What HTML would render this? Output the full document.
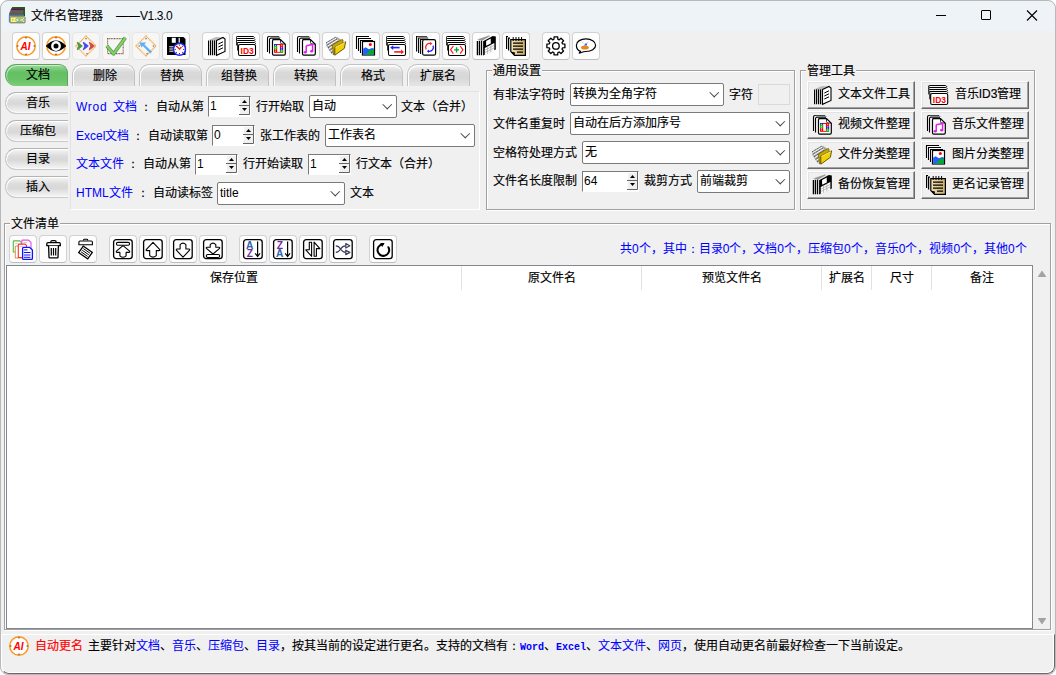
<!DOCTYPE html>
<html lang="zh-CN"><head><meta charset="utf-8">
<style>
*{box-sizing:border-box;margin:0;padding:0}
html,body{width:1056px;height:675px;overflow:hidden;background:#ffffff}
body{font-family:"Liberation Sans",sans-serif;font-size:12px;color:#000;position:relative;-webkit-text-stroke:0.15px currentColor}
.a{position:absolute}
#win{position:absolute;left:0;top:0;width:1056px;height:675px;background:#f0f0f0;border-radius:8px}
#frame{position:absolute;left:0;top:0;width:1056px;height:675px;border:1px solid #b9b9b9;border-radius:8px;pointer-events:none}
#title{position:absolute;left:0;top:0;width:1056px;height:31px;background:#eef3f8;border-radius:8px 8px 0 0}
.t{position:absolute;white-space:nowrap;line-height:16px;height:16px}
.tb{position:absolute;top:32px;width:28px;height:28px;background:#fdfdfd;border:1px solid #d2d2d2;border-bottom-color:#bdbdbd;border-radius:4px}
.tb.dis{background:#f6f6f6;border-color:#e6e6e6}
.tb svg,.lb svg,.mb svg{position:absolute}
.tab{position:absolute;top:64px;width:63px;height:22px;border:1px solid #c2c2c2;border-bottom:none;border-radius:10px 9px 0 0;background:linear-gradient(#f4f4f4,#d9d9d9 35%,#d7d7d7 60%,#e5e5e5);box-shadow:inset 1px 1px 0 #fff,inset 0 2px 0 rgba(255,255,255,0.6);text-align:center;line-height:22px;padding-left:2px}
.tab.on{background:linear-gradient(#9ad898,#64c064 35%,#68c367 70%,#7ccd78);border-color:#5aa55a;border-bottom:none;border-radius:11px 9px 0 11px;box-shadow:inset 1px 1px 0 rgba(255,255,255,0.55);line-height:20px}
.vt{position:absolute;left:5px;width:63px;height:22px;border:1px solid #c8c8c8;border-top-color:#b4b4b4;border-right:none;border-radius:11px 0 0 11px;background:linear-gradient(#f6f6f6,#dcdcdc 35%,#d8d8d8 55%,#ececec 85%,#f6f6f6);box-shadow:inset 1px 1px 0 #fff,inset 0 -1px 0 #fafafa;text-align:center;line-height:21px;padding-left:2px}
.grp{position:absolute;border:1px solid #a0a0a0;box-shadow:1px 1px 0 #fff, inset 1px 1px 0 #fff}
.gt{position:absolute;background:#f0f0f0;padding:0 1px;line-height:14px;height:14px;white-space:nowrap}
.cb{position:absolute;background:#fff;border:1px solid #7a7a7a;border-radius:2px;height:23px;line-height:21px;padding-left:2px;white-space:nowrap}
.cb:after{content:"";position:absolute;right:6px;top:5px;width:5.5px;height:5.5px;border-right:1px solid #444;border-bottom:1px solid #444;transform:rotate(45deg)}
.sp{position:absolute;background:#fff;height:21px;border-top:1px solid #7a7a7a;border-left:1px solid #7a7a7a;border-right:1px solid #fff;border-bottom:1px solid #fff;line-height:19px;padding-left:1px}
.sp svg{position:absolute;right:0;top:-1px}
.blue{color:#0000ff;-webkit-text-stroke:0.05px currentColor}
.mb{position:absolute;width:108px;height:28px;background:#f0f0f0;border-top:1px solid #fff;border-left:1px solid #fff;border-right:1px solid #696969;border-bottom:1px solid #696969;box-shadow:inset -1px -1px 0 #a0a0a0,inset 1px 1px 0 #e3e3e3;line-height:25px;padding-left:26px;text-align:center;white-space:nowrap}
.lb{position:absolute;top:235px;width:28px;height:28px;background:#fdfdfd;border:1px solid #d2d2d2;border-bottom-color:#bdbdbd;border-radius:4px}
.hs{position:absolute;top:266px;width:1px;height:24px;background:#e2e2e2}
.ht{position:absolute;top:270px;line-height:16px;white-space:nowrap;text-align:center}
.ln,.sp{-webkit-text-stroke:0}
svg text{-webkit-text-stroke:0}

</style></head><body>
<div id="win"></div>
<div id="title"></div>
<!-- title -->
<svg class="a" style="left:8px;top:6px" width="18" height="18" viewBox="0 0 18 18"><path d="M4.2 1H16.6L17 1.6V10H1.2V8.2Z" fill="#333"/><path d="M4.4 1.2H16.6V2.6H3.4Z" fill="#0a7a0a"/><path d="M3.4 2.6H16V3.6H2.8Z" fill="#a01818"/><path d="M2.8 3.6H16V4.6H2.3Z" fill="#1818a0"/><path d="M2.3 4.6H15.6V5.6H1.9Z" fill="#b08a40"/><path d="M1.9 5.6H15.6V6.6H1.5Z" fill="#8040b0"/><path d="M1.5 6.6H15.6V7.6H1.3Z" fill="#3a9a3a"/><path d="M1.3 7.6H15.6V8.6H1.2Z" fill="#b04040"/><path d="M1.2 8.6H16V9.8H1.2Z" fill="#4a90b0"/><rect x="15.6" y="1.6" width="1.4" height="6.8" fill="#0a6a0a"/><rect x="2" y="10.8" width="15" height="6" rx="0.6" fill="#fff680" stroke="#555" stroke-width="0.9"/><path d="M1.4 9V16.2" stroke="#4a8ab0" stroke-width="1.1"/><rect x="7.8" y="12.2" width="7.6" height="3.2" rx="1.5" fill="#fff" stroke="#55bb33" stroke-width="0.9"/><path d="M10.2 12.8V14.8M11.6 12.8V14.8M13 12.8V14.8" stroke="#888" stroke-width="0.9"/><rect x="4.2" y="13.2" width="1.3" height="1.3" fill="#999"/></svg>
<div class="t" style="left:31px;top:8px">文件名管理器</div>
<div class="t ln" style="left:116px;top:8px">——<span style="letter-spacing:-0.4px">V1.3.0</span></div>
<div class="a" style="left:936px;top:15px;width:10px;height:1px;background:#000"></div>
<div class="a" style="left:981px;top:10px;width:10px;height:10px;border:1px solid #000;border-radius:1px"></div>
<svg class="a" style="left:1026px;top:10px" width="12" height="11" viewBox="0 0 12 11"><path d="M1 0.5L11 10.5M11 0.5L1 10.5" stroke="#000" stroke-width="1.1"/></svg>

<!-- main toolbar -->
<div class="tb" style="left:12px"><svg style="left:0px;top:-1px" width="27" height="28" viewBox="0 0 27 28"><circle cx="13" cy="14" r="9.3" fill="#fff" stroke="#ff9417" stroke-width="1.4"/><g fill="#666"><rect x="12" y="5.299999999999999" width="2" height="1"/><rect x="12" y="21.7" width="2" height="1"/><rect x="4.299999999999999" y="13" width="1" height="2"/><rect x="20.7" y="13" width="1" height="2"/></g><text x="7.6" y="17.6" font-family="Liberation Sans" font-weight="bold" font-style="italic" font-size="11.7" fill="#ff0000" textLength="10" lengthAdjust="spacingAndGlyphs">AI</text></svg></div>
<div class="tb" style="left:42px"><svg style="left:0px;top:-1px" width="27" height="28" viewBox="0 0 27 28"><circle cx="13" cy="14" r="9.3" fill="#fff" stroke="#ff9417" stroke-width="1.4"/><g fill="#666"><rect x="12" y="5.299999999999999" width="2" height="1"/><rect x="12" y="21.7" width="2" height="1"/><rect x="4.299999999999999" y="13" width="1" height="2"/><rect x="20.7" y="13" width="1" height="2"/></g><path d="M2.8 14Q13 3.2 23.2 14Q13 24.8 2.8 14Z" fill="#000"/><circle cx="13" cy="14" r="4.9" fill="#fff"/><circle cx="13" cy="14" r="2.5" fill="#000"/></svg></div>
<div class="tb dis" style="left:72px"><svg style="left:0px;top:-1px" width="27" height="28" viewBox="0 0 27 28"><g opacity="0.8"><path d="M13 4L23 14L13 24L3 14Z" fill="none" stroke="#ff9417" stroke-width="1.3" stroke-dasharray="1.1 0.5"/><g transform="translate(1.6 0)"><path d="M2.8 10.5L7.4 14L2.8 17.5L4.4 14Z" fill="#208020" stroke="#208020" stroke-width="1.2" stroke-linejoin="round"/><path d="M8.8 10.5L13.4 14L8.8 17.5L10.4 14Z" fill="#2020ee" stroke="#2020ee" stroke-width="1.2" stroke-linejoin="round"/><path d="M14.8 10.5L19.4 14L14.8 17.5L16.4 14Z" fill="#c02020" stroke="#c02020" stroke-width="1.2" stroke-linejoin="round"/></g><rect x="12.4" y="6" width="1.3" height="1.3" fill="#555"/><rect x="13.4" y="21" width="1.3" height="1.3" fill="#555"/></g></svg></div>
<div class="tb dis" style="left:102px"><svg style="left:0px;top:-1px" width="27" height="28" viewBox="0 0 27 28"><g opacity="0.85"><rect x="4.6" y="6.6" width="15.6" height="15" fill="none" stroke="#6b4a1e" stroke-width="1.1" stroke-dasharray="1 0.6"/><path d="M3.8 13.8L10.6 21.8L22.4 5.6" fill="none" stroke="#2b7a2b" stroke-width="3.6" stroke-linejoin="round" opacity="0.9"/><path d="M3.8 13.8L10.6 21.8L22.4 5.6" fill="none" stroke="#70d040" stroke-width="2" stroke-linejoin="round"/></g></svg></div>
<div class="tb dis" style="left:132px"><svg style="left:0px;top:-1px" width="27" height="28" viewBox="0 0 27 28"><g opacity="0.8"><path d="M13 4L23 14L13 24L3 14Z" fill="none" stroke="#ff9417" stroke-width="1.3" stroke-dasharray="1.1 0.5"/><path d="M6.5 10.5H13.2L11.4 12.4L19 19.8L17.4 21.4L9.8 13.9L8.2 15.6Z" fill="#3a9ff0"/><rect x="12.4" y="6" width="1.3" height="1.3" fill="#555"/><rect x="5.5" y="13.4" width="1.3" height="1.3" fill="#555"/><rect x="19.8" y="13.4" width="1.3" height="1.3" fill="#555"/><rect x="13.4" y="21" width="1.3" height="1.3" fill="#555"/></g></svg></div>
<div class="tb" style="left:162px"><svg style="left:0px;top:-1px" width="27" height="28" viewBox="0 0 27 28"><path d="M4 5H20.5L22.5 7V23H4Z" fill="#000"/><rect x="8.8" y="5.8" width="4" height="5" fill="#fff"/><rect x="15.6" y="5.8" width="1.2" height="5" fill="#fff"/><path d="M6.3 14.8H12M6.3 17H12M6.3 19.2H12" stroke="#fff" stroke-width="1"/><circle cx="16.5" cy="17.3" r="6" fill="#fff" stroke="#1f1fff" stroke-width="1.4"/><path d="M13.6 14.2L16.5 17L18.5 15" fill="none" stroke="#ff1010" stroke-width="1.3"/><g fill="#000"><circle cx="16.5" cy="13" r="0.6"/><circle cx="16.5" cy="21.6" r="0.6"/><circle cx="12.2" cy="17.3" r="0.6"/><circle cx="20.8" cy="17.3" r="0.6"/><circle cx="13.5" cy="14.3" r="0.5"/><circle cx="19.5" cy="14.3" r="0.5"/><circle cx="13.5" cy="20.3" r="0.5"/><circle cx="19.5" cy="20.3" r="0.5"/></g></svg></div>
<div class="tb" style="left:202px"><svg style="left:0px;top:-1px" width="27" height="28" viewBox="0 0 27 28"><g stroke="#000" stroke-width="1.2" fill="none"><path d="M5.6 8.5V23.3M7.6 8V23.3M9.6 7.5V23.3M11.6 7V23.3"/></g><path d="M5 8.3L13 5L21 5.5L13.5 8.5Z" fill="#bbb"/><path d="M13.5 8.5L20 5.5L22 7V19.5L13.5 23.3Z" fill="#fff" stroke="#000" stroke-width="1.1"/><path d="M15.3 12L20 9.8M15.3 15L20 12.8M15.3 18L20 15.8" stroke="#000" stroke-width="1"/></svg></div>
<div class="tb" style="left:232px"><svg style="left:0px;top:-1px" width="27" height="28" viewBox="0 0 27 28"><g fill="none" stroke="#000" stroke-width="1"><path d="M3.5 6V5Q3.5 4.5 4.2 4.5H20.2Q20.8 4.5 21.3 5.2L21.8 5.8"/><path d="M3.5 8V7Q3.5 6.5 4.2 6.5H20.6Q21.2 6.5 21.7 7.2L22.2 7.8"/><path d="M3.5 10V9Q3.5 8.5 4.2 8.5H21Q21.6 8.5 22.1 9.2L22.5 9.8"/><path d="M4 12V11Q4 10.5 4.7 10.5H21.3Q21.9 10.5 22.4 11.2L22.7 11.8"/></g><path d="M3.5 5V13.5M4.5 11V18M5 12.5V19" stroke="#333" stroke-width="1"/><rect x="5.5" y="12.5" width="17" height="11" rx="1.5" fill="#fff" stroke="#000" stroke-width="1.1"/><text x="14.2" y="21.5" font-family="Liberation Sans" font-weight="bold" font-size="9" fill="#ff0000" text-anchor="middle" textLength="13.2" lengthAdjust="spacingAndGlyphs">ID3</text></svg></div>
<div class="tb" style="left:262px"><svg style="left:0px;top:-1px" width="27" height="28" viewBox="0 0 27 28"><g fill="none" stroke="#000" stroke-width="1.1"><path d="M4.5 20V6Q4.5 4.5 6 4.5H16"/><path d="M6.5 21.5V7.5Q6.5 6.3 8 6.3H17"/></g><path d="M6 4.5H16.5L18 6H8Z" fill="#888"/><path d="M9.5 7.6H17.5L22.3 12.2V21.8Q22.3 23.2 21 23.2H10.8Q9.5 23.2 9.5 21.8V9Q9.5 7.6 10.8 7.6" fill="#fff" stroke="#000" stroke-width="1.2"/><path d="M17.5 7.8V10.5Q17.5 12 19 12H22" fill="none" stroke="#000" stroke-width="0.8"/><rect x="11" y="12" width="9.1" height="8.8" fill="#ff0000"/><rect x="11" y="12" width="3.2" height="1.7" fill="#1a1aff"/><rect x="11" y="13.7" width="2.8" height="3.6" fill="#00d000"/><rect x="17.3" y="15.2" width="2.8" height="2.9" fill="#1a1aff"/><rect x="17.3" y="18.1" width="2.8" height="2.7" fill="#00d000"/><rect x="14.2" y="13" width="2.7" height="6.9" fill="#fff"/><g fill="#fff"><circle cx="12.4" cy="13.3" r="0.55"/><circle cx="12.4" cy="15.2" r="0.55"/><circle cx="12.4" cy="17.1" r="0.55"/><circle cx="12.4" cy="19" r="0.55"/><circle cx="18.7" cy="13.3" r="0.55"/><circle cx="18.7" cy="15.2" r="0.55"/><circle cx="18.7" cy="17.1" r="0.55"/><circle cx="18.7" cy="19" r="0.55"/></g></svg></div>
<div class="tb" style="left:292px"><svg style="left:0px;top:-1px" width="27" height="28" viewBox="0 0 27 28"><g fill="none" stroke="#000" stroke-width="1.1"><path d="M4.5 20V6Q4.5 4.5 6 4.5H16"/><path d="M6.5 21.5V7.5Q6.5 6.3 8 6.3H17"/></g><path d="M6 4.5H16.5L18 6H8Z" fill="#888"/><path d="M9.5 7.6H17.5L22.3 12.2V21.8Q22.3 23.2 21 23.2H10.8Q9.5 23.2 9.5 21.8V9Q9.5 7.6 10.8 7.6" fill="#fff" stroke="#000" stroke-width="1.2"/><path d="M17.5 7.8V10.5Q17.5 12 19 12H22" fill="none" stroke="#000" stroke-width="0.8"/><path d="M13.2 13.8L19.6 12.4V19" fill="none" stroke="#dd22ee" stroke-width="1.5"/><path d="M13.2 13.8V20" stroke="#dd22ee" stroke-width="1.5"/><ellipse cx="12.2" cy="20.2" rx="1.6" ry="1.2" fill="#dd22ee"/><ellipse cx="18.6" cy="19.2" rx="1.6" ry="1.2" fill="#dd22ee"/></svg></div>
<div class="tb" style="left:322px"><svg style="left:0px;top:-1px" width="27" height="28" viewBox="0 0 27 28"><path d="M3 10.6L12.8 4.8L14.2 5L18 7.6V14.5L10.5 22.8L8.4 21.8L3.6 14.2Z" fill="#a8a8a8"/><g fill="none" stroke="#fff" stroke-width="1"><path d="M3.8 11.6L13.2 6.1M4.6 14L14.8 7.8M6 16.6L16.2 9.8M7.6 19.2L17.2 12.3M9.4 21.6L17.8 14.8"/></g><g fill="none" stroke="#222" stroke-width="0.7" stroke-dasharray="1 0.8"><path d="M3.2 10.7L12.9 5M3.8 13.2L14 7M5 15.8L15.5 9M6.6 18.3L16.8 11.3M8.2 20.8L17.6 13.8"/></g><path d="M9.4 13L19.2 7.4L20 8V16.6L10.6 22.8Z" fill="#c8a800" stroke="#6a5800" stroke-width="0.7"/><path d="M11.8 15.2L22.6 9.8L21.4 16.3L11.8 23.2Z" fill="#f0d200" stroke="#5a4a00" stroke-width="0.9" stroke-linejoin="round"/><path d="M12.4 15.4L21.8 10.6" stroke="#fff7a0" stroke-width="0.9"/></svg></div>
<div class="tb" style="left:352px"><svg style="left:0px;top:-1px" width="27" height="28" viewBox="0 0 27 28"><g fill="#fff" stroke="#000" stroke-width="1.1"><path d="M3.5 17V4.5H16"/><path d="M5.5 19V6.5H18"/><path d="M7.5 21V8.5H20"/></g><rect x="9.5" y="9.5" width="12" height="13.5" fill="#fff" stroke="#000" stroke-width="1.2"/><circle cx="17.3" cy="12.6" r="1.5" fill="#ff0000"/><path d="M10.1 16.8L12.5 15.2L16 17.3L19 16L20.9 16.6V22.4H10.1Z" fill="#1f60ff"/><path d="M12.5 22.4L17 18.3L19 17.5L20.9 17.8V22.4Z" fill="#00b020"/></svg></div>
<div class="tb" style="left:382px"><svg style="left:0px;top:-1px" width="27" height="28" viewBox="0 0 27 28"><g fill="none" stroke="#000" stroke-width="1"><path d="M3.5 6V5Q3.5 4.5 4.2 4.5H20.2Q20.8 4.5 21.3 5.2L21.8 5.8"/><path d="M3.5 8V7Q3.5 6.5 4.2 6.5H20.6Q21.2 6.5 21.7 7.2L22.2 7.8"/><path d="M3.5 10V9Q3.5 8.5 4.2 8.5H21Q21.6 8.5 22.1 9.2L22.5 9.8"/><path d="M4 12V11Q4 10.5 4.7 10.5H21.3Q21.9 10.5 22.4 11.2L22.7 11.8"/></g><path d="M3.5 5V13.5M4.5 11V18M5 12.5V19" stroke="#333" stroke-width="1"/><rect x="5.5" y="12.5" width="17" height="11" rx="1.5" fill="#fff" stroke="#000" stroke-width="1.1"/><path d="M16.6 15.6H9.5" stroke="#1f1fff" stroke-width="1.6"/><path d="M7.2 15.6L10.2 13.3V17.9Z" fill="#1f1fff"/><path d="M11.2 19.9H18.5" stroke="#ff1a1a" stroke-width="1.6"/><path d="M21 19.9L18 17.6V22.2Z" fill="#ff1a1a"/></svg></div>
<div class="tb" style="left:412px"><svg style="left:0px;top:-1px" width="27" height="28" viewBox="0 0 27 28"><g fill="none" stroke="#000" stroke-width="1.1"><path d="M3.6 19.5V4.5H14"/><path d="M5.6 21V6H15"/><path d="M7.6 22V7.5H16"/></g><path d="M4 4.5H14L16 6.5H6Z" fill="#888"/><rect x="9.6" y="7.6" width="13" height="15.6" rx="1.8" fill="#fff" stroke="#000" stroke-width="1.2"/><path d="M13.2 17.5A4 4 0 0 1 17.5 11.5" fill="none" stroke="#ff1a1a" stroke-width="1.3"/><path d="M17.2 9.8L19.3 11.7L17.2 13.3Z" fill="#ff1a1a"/><path d="M20 13.6A4 4 0 0 1 15.8 19.3" fill="none" stroke="#1f1fff" stroke-width="1.3"/><path d="M16 17.6L13.9 19.3L16 21Z" fill="#1f1fff"/></svg></div>
<div class="tb" style="left:442px"><svg style="left:0px;top:-1px" width="27" height="28" viewBox="0 0 27 28"><g fill="none" stroke="#000" stroke-width="1"><path d="M3.5 6V5Q3.5 4.5 4.2 4.5H20.2Q20.8 4.5 21.3 5.2L21.8 5.8"/><path d="M3.5 8V7Q3.5 6.5 4.2 6.5H20.6Q21.2 6.5 21.7 7.2L22.2 7.8"/><path d="M3.5 10V9Q3.5 8.5 4.2 8.5H21Q21.6 8.5 22.1 9.2L22.5 9.8"/><path d="M4 12V11Q4 10.5 4.7 10.5H21.3Q21.9 10.5 22.4 11.2L22.7 11.8"/></g><path d="M3.5 5V13.5M4.5 11V18M5 12.5V19" stroke="#333" stroke-width="1"/><rect x="5.5" y="12.5" width="17" height="11" rx="1.5" fill="#fff" stroke="#000" stroke-width="1.1"/><path d="M10.3 14L7.6 17.8L10.3 21.6M17.2 14L19.9 17.8L17.2 21.6" fill="none" stroke="#ff1a1a" stroke-width="1.2"/><path d="M13.6 15.3V20.4M11.1 17.9H16.1" stroke="#10a030" stroke-width="1.4"/></svg></div>
<div class="tb" style="left:472px"><svg style="left:0px;top:-1px" width="27" height="28" viewBox="0 0 27 28"><g stroke="#000" stroke-width="1.3"><path d="M4.4 9.1V23.3M6.4 8.8V23.3M8.5 8.6V23.3"/></g><path d="M4 7.6L15.8 3.6L17.2 4.1L9.6 8.6Z" fill="#999"/><path d="M10.1 9.3L19.8 4L22.8 4.5V17.6L10.1 23.6Z" fill="#000"/><path d="M13.1 9L17.8 6.4V11.4L13.1 13.8Z" fill="#fff"/><rect x="17.9" y="6.2" width="1" height="3.4" fill="#000"/><path d="M11.8 15.9L21.3 10.9V18.7L11.8 23Z" fill="#fff"/><path d="M11.8 18.2L21.3 13.4M11.8 20.6L21.3 15.8M14.6 14.5V21.7M17.8 12.8V20.2" stroke="#aaa" stroke-width="0.8"/></svg></div>
<div class="tb" style="left:502px"><svg style="left:0px;top:-1px" width="27" height="28" viewBox="0 0 27 28"><g stroke="#000" stroke-width="1.2" fill="none"><path d="M3.6 17V4.5H5M5.6 18.6V6.2H7"/></g><defs><linearGradient id="tan" x1="0" y1="0" x2="1" y2="0"><stop offset="0" stop-color="#f4e4b4"/><stop offset="1" stop-color="#c9b070"/></linearGradient></defs><path d="M7.8 7.6H22.4V23.3H11.5L7.8 19.6Z" fill="url(#tan)" stroke="#000" stroke-width="1.2"/><path d="M7.8 19.6L11.5 23.3L12 20.5Z" fill="#000"/><path d="M10 11.2H20M10 14.2H20M10 17.2H20M14 20.2H20" stroke="#000" stroke-width="1.3"/><g stroke="#000" stroke-width="1"><path d="M10.2 5V9M13 5V9M15.8 5V9M18.6 5V9"/></g></svg></div>
<div class="tb" style="left:542px"><svg style="left:0px;top:-1px" width="27" height="28" viewBox="0 0 27 28"><path d="M10.93 7.29L11.11 4.88L14.69 4.88L14.87 7.29A6.9 6.9 0 0 1 16.18 7.83L18.02 6.25L20.55 8.78L18.97 10.62A6.9 6.9 0 0 1 19.51 11.93L21.92 12.11L21.92 15.69L19.51 15.87A6.9 6.9 0 0 1 18.97 17.18L20.55 19.02L18.02 21.55L16.18 19.97A6.9 6.9 0 0 1 14.87 20.51L14.69 22.92L11.11 22.92L10.93 20.51A6.9 6.9 0 0 1 9.62 19.97L7.78 21.55L5.25 19.02L6.83 17.18A6.9 6.9 0 0 1 6.29 15.87L3.88 15.69L3.88 12.11L6.29 11.93A6.9 6.9 0 0 1 6.83 10.62L5.25 8.78L7.78 6.25L9.62 7.83A6.9 6.9 0 0 1 10.93 7.29Z" fill="#fff" stroke="#000" stroke-width="1.3" stroke-linejoin="round"/><circle cx="12.9" cy="13.9" r="3.3" fill="#fff" stroke="#000" stroke-width="1.3"/></svg></div>
<div class="tb" style="left:572px"><svg style="left:0px;top:-1px" width="27" height="28" viewBox="0 0 27 28"><path d="M7.6 19.4C4.9 18.3 3.4 15.9 3.4 13.2C3.4 9.4 7.8 6.9 13 6.9C18.3 6.9 22.6 9.5 22.6 13.2C22.6 17 18.3 19.5 13 19.5C11.2 19.5 9.8 19.8 8.5 20.5L6.2 21.2Z" fill="#fff" stroke="#000" stroke-width="1.2" stroke-linejoin="round"/><ellipse cx="11.9" cy="15.4" rx="3.9" ry="2" fill="#e8881a"/><path d="M11.3 13.6L12.2 10.8L12.9 12.2L14.1 10.6L13.9 13.4Z" fill="#3f5fff"/><path d="M8.6 9.8L11 11.2M15.8 9.6L13.8 11" stroke="#bbc" stroke-width="0.6"/></svg></div>

<!-- tabs -->
<div class="tab on" style="left:5px">文档</div>
<div class="tab" style="left:72px">删除</div>
<div class="tab" style="left:139px">替换</div>
<div class="tab" style="left:206px">组替换</div>
<div class="tab" style="left:273px">转换</div>
<div class="tab" style="left:340px">格式</div>
<div class="tab" style="left:407px;padding-left:0;text-indent:-2px">扩展名</div>
<div class="vt" style="top:92px">音乐</div>
<div class="vt" style="top:120px">压缩包</div>
<div class="vt" style="top:148px">目录</div>
<div class="vt" style="top:176px">插入</div>

<!-- doc panel -->
<div class="a" style="left:70px;top:91px;width:410px;height:119px;border-top:1px solid #e3e3e3;border-left:1px solid #e3e3e3;border-bottom:1px solid #fff;border-right:1px solid #fff"></div>
<div class="t blue" style="left:76px;top:99px"><span class="ln" style="letter-spacing:0.7px">Wrod</span></div><div class="t blue" style="left:113px;top:99px">文档</div>
<div class="t" style="left:140px;top:99px" lang="ja">：</div>
<div class="t" style="left:156px;top:99px">自动从第</div>
<div class="sp" style="left:208px;top:96px;width:43px">1<svg width="11" height="19" viewBox="0 0 11 19"><rect x="1" y="2" width="9" height="7" fill="#f0f0f0"/><rect x="1" y="10" width="9" height="8" fill="#f0f0f0"/><path d="M10.5 0V18.5H0M0 9.5H10" fill="none" stroke="#646464"/><path d="M3 7H8L5.5 4Z" fill="#000"/><path d="M3 12H8L5.5 15Z" fill="#000"/></svg></div>
<div class="t" style="left:256px;top:99px">行开始取</div>
<div class="cb" style="left:309px;top:95px;width:88px">自动</div>
<div class="t" style="left:401px;top:99px">文本（合并）</div>

<div class="t blue" style="left:76px;top:128px"><span class="ln">Excel</span>文档</div>
<div class="t" style="left:132px;top:128px" lang="ja">：</div>
<div class="t" style="left:148px;top:128px">自动读取第</div>
<div class="sp" style="left:212px;top:125px;width:43px">0<svg width="11" height="19" viewBox="0 0 11 19"><rect x="1" y="2" width="9" height="7" fill="#f0f0f0"/><rect x="1" y="10" width="9" height="8" fill="#f0f0f0"/><path d="M10.5 0V18.5H0M0 9.5H10" fill="none" stroke="#646464"/><path d="M3 7H8L5.5 4Z" fill="#000"/><path d="M3 12H8L5.5 15Z" fill="#000"/></svg></div>
<div class="t" style="left:260px;top:128px">张工作表的</div>
<div class="cb" style="left:325px;top:124px;width:150px">工作表名</div>

<div class="t blue" style="left:76px;top:156px">文本文件</div>
<div class="t" style="left:127px;top:156px" lang="ja">：</div>
<div class="t" style="left:143px;top:156px">自动从第</div>
<div class="sp" style="left:195px;top:154px;width:43px">1<svg width="11" height="19" viewBox="0 0 11 19"><rect x="1" y="2" width="9" height="7" fill="#f0f0f0"/><rect x="1" y="10" width="9" height="8" fill="#f0f0f0"/><path d="M10.5 0V18.5H0M0 9.5H10" fill="none" stroke="#646464"/><path d="M3 7H8L5.5 4Z" fill="#000"/><path d="M3 12H8L5.5 15Z" fill="#000"/></svg></div>
<div class="t" style="left:243px;top:156px">行开始读取</div>
<div class="sp" style="left:308px;top:154px;width:43px">1<svg width="11" height="19" viewBox="0 0 11 19"><rect x="1" y="2" width="9" height="7" fill="#f0f0f0"/><rect x="1" y="10" width="9" height="8" fill="#f0f0f0"/><path d="M10.5 0V18.5H0M0 9.5H10" fill="none" stroke="#646464"/><path d="M3 7H8L5.5 4Z" fill="#000"/><path d="M3 12H8L5.5 15Z" fill="#000"/></svg></div>
<div class="t" style="left:356px;top:156px">行文本（合并）</div>

<div class="t blue" style="left:76px;top:185px"><span class="ln">HTML</span>文件</div>
<div class="t" style="left:137px;top:185px" lang="ja">：</div>
<div class="t" style="left:153px;top:185px">自动读标签</div>
<div class="cb" style="left:217px;top:182px;width:128px"><span class="ln">title</span></div>
<div class="t" style="left:350px;top:185px">文本</div>

<!-- general settings -->
<div class="grp" style="left:486px;top:70px;width:309px;height:140px"></div>
<div class="gt" style="left:492px;top:64px">通用设置</div>
<div class="t" style="left:493px;top:87px">有非法字符时</div>
<div class="cb" style="left:570px;top:83px;width:154px">转换为全角字符</div>
<div class="t" style="left:729px;top:87px">字符</div>
<div class="a" style="left:758px;top:84px;width:32px;height:21px;border:1px solid #d9d9d9;background:#f0f0f0"></div>
<div class="t" style="left:493px;top:116px">文件名重复时</div>
<div class="cb" style="left:570px;top:112px;width:220px">自动在后方添加序号</div>
<div class="t" style="left:493px;top:145px">空格符处理方式</div>
<div class="cb" style="left:582px;top:141px;width:208px">无</div>
<div class="t" style="left:493px;top:173px">文件名长度限制</div>
<div class="sp" style="left:582px;top:171px;width:57px">64<svg width="11" height="19" viewBox="0 0 11 19"><rect x="1" y="2" width="9" height="7" fill="#f0f0f0"/><rect x="1" y="10" width="9" height="8" fill="#f0f0f0"/><path d="M10.5 0V18.5H0M0 9.5H10" fill="none" stroke="#646464"/><path d="M3 7H8L5.5 4Z" fill="#000"/><path d="M3 12H8L5.5 15Z" fill="#000"/></svg></div>
<div class="t" style="left:644px;top:173px">裁剪方式</div>
<div class="cb" style="left:697px;top:170px;width:93px">前端裁剪</div>

<!-- management tools -->
<div class="grp" style="left:800px;top:70px;width:235px;height:140px"></div>
<div class="gt" style="left:806px;top:64px">管理工具</div>
<div class="mb" style="left:807px;top:81px"><svg style="left:1px;top:-1px" width="27" height="28" viewBox="0 0 27 28"><g stroke="#000" stroke-width="1.2" fill="none"><path d="M5.6 8.5V23.3M7.6 8V23.3M9.6 7.5V23.3M11.6 7V23.3"/></g><path d="M5 8.3L13 5L21 5.5L13.5 8.5Z" fill="#bbb"/><path d="M13.5 8.5L20 5.5L22 7V19.5L13.5 23.3Z" fill="#fff" stroke="#000" stroke-width="1.1"/><path d="M15.3 12L20 9.8M15.3 15L20 12.8M15.3 18L20 15.8" stroke="#000" stroke-width="1"/></svg>文本文件工具</div>
<div class="mb" style="left:921px;top:81px"><svg style="left:1px;top:-1px" width="27" height="28" viewBox="0 0 27 28"><g transform="translate(2.2 0)"><g fill="none" stroke="#000" stroke-width="1"><path d="M3.5 6V5Q3.5 4.5 4.2 4.5H20.2Q20.8 4.5 21.3 5.2L21.8 5.8"/><path d="M3.5 8V7Q3.5 6.5 4.2 6.5H20.6Q21.2 6.5 21.7 7.2L22.2 7.8"/><path d="M3.5 10V9Q3.5 8.5 4.2 8.5H21Q21.6 8.5 22.1 9.2L22.5 9.8"/><path d="M4 12V11Q4 10.5 4.7 10.5H21.3Q21.9 10.5 22.4 11.2L22.7 11.8"/></g><path d="M3.5 5V13.5M4.5 11V18M5 12.5V19" stroke="#333" stroke-width="1"/><rect x="5.5" y="12.5" width="17" height="11" rx="1.5" fill="#fff" stroke="#000" stroke-width="1.1"/><text x="14.2" y="21.5" font-family="Liberation Sans" font-weight="bold" font-size="9" fill="#ff0000" text-anchor="middle" textLength="13.2" lengthAdjust="spacingAndGlyphs">ID3</text></g></svg>音乐ID3管理</div>
<div class="mb" style="left:807px;top:111px"><svg style="left:1px;top:-1px" width="27" height="28" viewBox="0 0 27 28"><g fill="none" stroke="#000" stroke-width="1.1"><path d="M4.5 20V6Q4.5 4.5 6 4.5H16"/><path d="M6.5 21.5V7.5Q6.5 6.3 8 6.3H17"/></g><path d="M6 4.5H16.5L18 6H8Z" fill="#888"/><path d="M9.5 7.6H17.5L22.3 12.2V21.8Q22.3 23.2 21 23.2H10.8Q9.5 23.2 9.5 21.8V9Q9.5 7.6 10.8 7.6" fill="#fff" stroke="#000" stroke-width="1.2"/><path d="M17.5 7.8V10.5Q17.5 12 19 12H22" fill="none" stroke="#000" stroke-width="0.8"/><rect x="11" y="12" width="9.1" height="8.8" fill="#ff0000"/><rect x="11" y="12" width="3.2" height="1.7" fill="#1a1aff"/><rect x="11" y="13.7" width="2.8" height="3.6" fill="#00d000"/><rect x="17.3" y="15.2" width="2.8" height="2.9" fill="#1a1aff"/><rect x="17.3" y="18.1" width="2.8" height="2.7" fill="#00d000"/><rect x="14.2" y="13" width="2.7" height="6.9" fill="#fff"/><g fill="#fff"><circle cx="12.4" cy="13.3" r="0.55"/><circle cx="12.4" cy="15.2" r="0.55"/><circle cx="12.4" cy="17.1" r="0.55"/><circle cx="12.4" cy="19" r="0.55"/><circle cx="18.7" cy="13.3" r="0.55"/><circle cx="18.7" cy="15.2" r="0.55"/><circle cx="18.7" cy="17.1" r="0.55"/><circle cx="18.7" cy="19" r="0.55"/></g></svg>视频文件整理</div>
<div class="mb" style="left:921px;top:111px"><svg style="left:1px;top:-1px" width="27" height="28" viewBox="0 0 27 28"><g fill="none" stroke="#000" stroke-width="1.1"><path d="M4.5 20V6Q4.5 4.5 6 4.5H16"/><path d="M6.5 21.5V7.5Q6.5 6.3 8 6.3H17"/></g><path d="M6 4.5H16.5L18 6H8Z" fill="#888"/><path d="M9.5 7.6H17.5L22.3 12.2V21.8Q22.3 23.2 21 23.2H10.8Q9.5 23.2 9.5 21.8V9Q9.5 7.6 10.8 7.6" fill="#fff" stroke="#000" stroke-width="1.2"/><path d="M17.5 7.8V10.5Q17.5 12 19 12H22" fill="none" stroke="#000" stroke-width="0.8"/><path d="M13.2 13.8L19.6 12.4V19" fill="none" stroke="#dd22ee" stroke-width="1.5"/><path d="M13.2 13.8V20" stroke="#dd22ee" stroke-width="1.5"/><ellipse cx="12.2" cy="20.2" rx="1.6" ry="1.2" fill="#dd22ee"/><ellipse cx="18.6" cy="19.2" rx="1.6" ry="1.2" fill="#dd22ee"/></svg>音乐文件整理</div>
<div class="mb" style="left:807px;top:141px"><svg style="left:1px;top:-1px" width="27" height="28" viewBox="0 0 27 28"><path d="M3 10.6L12.8 4.8L14.2 5L18 7.6V14.5L10.5 22.8L8.4 21.8L3.6 14.2Z" fill="#a8a8a8"/><g fill="none" stroke="#fff" stroke-width="1"><path d="M3.8 11.6L13.2 6.1M4.6 14L14.8 7.8M6 16.6L16.2 9.8M7.6 19.2L17.2 12.3M9.4 21.6L17.8 14.8"/></g><g fill="none" stroke="#222" stroke-width="0.7" stroke-dasharray="1 0.8"><path d="M3.2 10.7L12.9 5M3.8 13.2L14 7M5 15.8L15.5 9M6.6 18.3L16.8 11.3M8.2 20.8L17.6 13.8"/></g><path d="M9.4 13L19.2 7.4L20 8V16.6L10.6 22.8Z" fill="#c8a800" stroke="#6a5800" stroke-width="0.7"/><path d="M11.8 15.2L22.6 9.8L21.4 16.3L11.8 23.2Z" fill="#f0d200" stroke="#5a4a00" stroke-width="0.9" stroke-linejoin="round"/><path d="M12.4 15.4L21.8 10.6" stroke="#fff7a0" stroke-width="0.9"/></svg>文件分类整理</div>
<div class="mb" style="left:921px;top:141px"><svg style="left:1px;top:-1px" width="27" height="28" viewBox="0 0 27 28"><g fill="#fff" stroke="#000" stroke-width="1.1"><path d="M3.5 17V4.5H16"/><path d="M5.5 19V6.5H18"/><path d="M7.5 21V8.5H20"/></g><rect x="9.5" y="9.5" width="12" height="13.5" fill="#fff" stroke="#000" stroke-width="1.2"/><circle cx="17.3" cy="12.6" r="1.5" fill="#ff0000"/><path d="M10.1 16.8L12.5 15.2L16 17.3L19 16L20.9 16.6V22.4H10.1Z" fill="#1f60ff"/><path d="M12.5 22.4L17 18.3L19 17.5L20.9 17.8V22.4Z" fill="#00b020"/></svg>图片分类整理</div>
<div class="mb" style="left:807px;top:171px"><svg style="left:1px;top:-1px" width="27" height="28" viewBox="0 0 27 28"><g stroke="#000" stroke-width="1.3"><path d="M4.4 9.1V23.3M6.4 8.8V23.3M8.5 8.6V23.3"/></g><path d="M4 7.6L15.8 3.6L17.2 4.1L9.6 8.6Z" fill="#999"/><path d="M10.1 9.3L19.8 4L22.8 4.5V17.6L10.1 23.6Z" fill="#000"/><path d="M13.1 9L17.8 6.4V11.4L13.1 13.8Z" fill="#fff"/><rect x="17.9" y="6.2" width="1" height="3.4" fill="#000"/><path d="M11.8 15.9L21.3 10.9V18.7L11.8 23Z" fill="#fff"/><path d="M11.8 18.2L21.3 13.4M11.8 20.6L21.3 15.8M14.6 14.5V21.7M17.8 12.8V20.2" stroke="#aaa" stroke-width="0.8"/></svg>备份恢复管理</div>
<div class="mb" style="left:921px;top:171px"><svg style="left:1px;top:-1px" width="27" height="28" viewBox="0 0 27 28"><g stroke="#000" stroke-width="1.2" fill="none"><path d="M3.6 17V4.5H5M5.6 18.6V6.2H7"/></g><defs><linearGradient id="tan2" x1="0" y1="0" x2="1" y2="0"><stop offset="0" stop-color="#f4e4b4"/><stop offset="1" stop-color="#c9b070"/></linearGradient></defs><path d="M7.8 7.6H22.4V23.3H11.5L7.8 19.6Z" fill="url(#tan2)" stroke="#000" stroke-width="1.2"/><path d="M7.8 19.6L11.5 23.3L12 20.5Z" fill="#000"/><path d="M10 11.2H20M10 14.2H20M10 17.2H20M14 20.2H20" stroke="#000" stroke-width="1.3"/><g stroke="#000" stroke-width="1"><path d="M10.2 5V9M13 5V9M15.8 5V9M18.6 5V9"/></g></svg>更名记录管理</div>

<!-- file list -->
<div class="grp" style="left:4px;top:223px;width:1047px;height:407px"></div>
<div class="gt" style="left:10px;top:217px">文件清单</div>
<div class="lb" style="left:9px"><svg style="left:0px;top:-1px" width="28" height="28" viewBox="0 0 28 28"><g transform="translate(-1 0)"><g stroke-width="1.1" fill="#fff"><path d="M4.3 6.8Q4.3 5.9 5.2 5.9H10.8L12.3 7.4V17H4.3Z" stroke="#55bb44"/><path d="M12.8 6Q12.8 5.1 13.7 5.1H19.5L22 7.6V15.5H12.8Z" stroke="#e050e0"/><path d="M6.3 12Q6.3 11 7.2 11H12.5L14.5 13V23H6.3Z" stroke="#d0a050"/><path d="M9.3 10Q9.3 9.1 10.2 9.1H16L17.5 10.6V22.5H9.3Z" stroke="#ff3030"/><path d="M13.6 13.3Q13.6 12.3 14.6 12.3H20.6L23.4 15V23.4Q23.4 24.3 22.5 24.3H14.6Q13.6 24.3 13.6 23.4Z" stroke="#1010ff" stroke-width="1.3"/></g><path d="M14.9 14.9H18.5M14.9 17.5H21.5M14.9 20H21.5M14.9 22.3H21.5" stroke="#1010ff" stroke-width="1"/><path d="M5.8 8.3H9M11 11.5H14.5M14.5 7.5H18" stroke="#ccc" stroke-width="0.9"/></g></svg></div>
<div class="lb" style="left:39px"><svg style="left:0px;top:-1px" width="28" height="28" viewBox="0 0 28 28"><g transform="translate(-1 0)"><path d="M11.8 7.2Q11.8 5.6 13.3 5.6H15.7Q17.2 5.6 17.2 7.2" fill="none" stroke="#000" stroke-width="1.3"/><path d="M9 7.6H20.2Q21.3 7.6 21.3 9V10.6H7.8V9Q7.8 7.6 9 7.6Z" fill="#fff" stroke="#000" stroke-width="1.3"/><path d="M9.6 10.8L10 22.2Q10 22.9 10.8 22.9H18.3Q19 22.9 19 22.2L19.4 10.8" fill="#fff" stroke="#000" stroke-width="1.3"/><path d="M12.3 13V20.6M14.5 13V20.6M16.7 13V20.6" stroke="#000" stroke-width="1.2"/></g></svg></div>
<div class="lb" style="left:69px"><svg style="left:0px;top:-1px" width="28" height="28" viewBox="0 0 28 28"><g transform="translate(-1 0)"><path d="M14.6 5.6V5Q14.6 4.2 15.4 4.2H17.9Q18.7 4.2 18.7 5V5.6" fill="none" stroke="#000" stroke-width="1.1"/><path d="M11 6H22.3Q23.4 6 23.4 7.2V9.8H9.9V7.2Q9.9 6 11 6Z" fill="#fff" stroke="#000" stroke-width="1.1"/><g transform="rotate(35 16.5 17.5)"><rect x="11" y="13.5" width="11" height="8" fill="#fff" stroke="#000" stroke-width="1.3"/><path d="M12.5 15.5H20.5M12.5 17.5H20.5M12.5 19.5H20.5" stroke="#000" stroke-width="0.9"/></g></g></svg></div>
<div class="lb" style="left:109px"><svg style="left:0px;top:-1px" width="28" height="28" viewBox="0 0 28 28"><rect x="3.6" y="4.6" width="18.6" height="19" rx="2.6" fill="#fff" stroke="#000" stroke-width="1.3"/><rect x="6.4" y="7.4" width="13.2" height="2.9" rx="1.45" fill="#fff" stroke="#000" stroke-width="1.1"/><path d="M13 10.6L19.6 16.2Q20 17.4 19 17.4H16.1V20.8Q13 23.6 9.9 20.8V17.4H7Q6 17.4 6.4 16.2Z" fill="#fff" stroke="#000" stroke-width="1.1" stroke-linejoin="round"/></svg></div>
<div class="lb" style="left:139px"><svg style="left:0px;top:-1px" width="28" height="28" viewBox="0 0 28 28"><rect x="3.6" y="4.6" width="18.6" height="19" rx="2.6" fill="#fff" stroke="#000" stroke-width="1.3"/><path d="M13 7.4L19.8 14.6Q20.2 15.6 19 15.6H16.3V20.6Q13 23.6 9.7 20.6V15.6H7Q5.8 15.6 6.2 14.6Z" fill="#fff" stroke="#000" stroke-width="1.1" stroke-linejoin="round"/></svg></div>
<div class="lb" style="left:169px"><svg style="left:0px;top:-1px" width="28" height="28" viewBox="0 0 28 28"><rect x="3.6" y="4.6" width="18.6" height="19" rx="2.6" fill="#fff" stroke="#000" stroke-width="1.3"/><path d="M13 22.2L19.6 15.2Q20 14 19 14H15.9V9.6Q13 6.6 10.1 9.6V14H7Q6 14 6.4 15.2Z" fill="#fff" stroke="#000" stroke-width="1.1" stroke-linejoin="round"/></svg></div>
<div class="lb" style="left:199px"><svg style="left:0px;top:-1px" width="28" height="28" viewBox="0 0 28 28"><rect x="3.6" y="4.6" width="18.6" height="19" rx="2.6" fill="#fff" stroke="#000" stroke-width="1.3"/><path d="M13 19L19.6 13.4Q20 12.2 19 12.2H15.8V9.6Q13 6.6 10.2 9.6V12.2H7Q6 12.2 6.4 13.4Z" fill="#fff" stroke="#000" stroke-width="1.1" stroke-linejoin="round"/><rect x="6.3" y="19.5" width="13.4" height="3" rx="1.5" fill="#fff" stroke="#000" stroke-width="1.1"/></svg></div>
<div class="lb" style="left:239px"><svg style="left:0px;top:-1px" width="28" height="28" viewBox="0 0 28 28"><rect x="3.6" y="4.6" width="18.6" height="19" rx="2.6" fill="#fff" stroke="#000" stroke-width="1.3"/><text x="9.8" y="13.8" font-family="Liberation Sans" font-weight="bold" font-size="10.2" fill="#2f62b0" text-anchor="middle">A</text><text x="9.8" y="21.8" font-family="Liberation Sans" font-weight="bold" font-size="10.2" fill="#7030a0" text-anchor="middle">Z</text><path d="M17.6 6.5V21" stroke="#000" stroke-width="1.2"/><path d="M15.2 18.3L17.6 21.4L20 18.3" fill="none" stroke="#000" stroke-width="1.2"/></svg></div>
<div class="lb" style="left:269px"><svg style="left:0px;top:-1px" width="28" height="28" viewBox="0 0 28 28"><rect x="3.6" y="4.6" width="18.6" height="19" rx="2.6" fill="#fff" stroke="#000" stroke-width="1.3"/><text x="9.8" y="13.8" font-family="Liberation Sans" font-weight="bold" font-size="10.2" fill="#7030a0" text-anchor="middle">Z</text><text x="9.8" y="21.8" font-family="Liberation Sans" font-weight="bold" font-size="10.2" fill="#2f62b0" text-anchor="middle">A</text><path d="M17.6 6.5V21" stroke="#000" stroke-width="1.2"/><path d="M15.2 18.3L17.6 21.4L20 18.3" fill="none" stroke="#000" stroke-width="1.2"/></svg></div>
<div class="lb" style="left:299px"><svg style="left:0px;top:-1px" width="28" height="28" viewBox="0 0 28 28"><rect x="3.6" y="4.6" width="18.6" height="19" rx="2.6" fill="#fff" stroke="#000" stroke-width="1.3"/><g transform="translate(-1 0)"><path d="M10.3 7.2H12.6V21.3L6.8 14.8H10.3Z" fill="#fff" stroke="#000" stroke-width="1.1" stroke-linejoin="round"/><path d="M17.4 21.2H15.1V7.1L20.9 13.6H17.4Z" fill="#fff" stroke="#000" stroke-width="1.1" stroke-linejoin="round"/></g></svg></div>
<div class="lb" style="left:329px"><svg style="left:0px;top:-1px" width="28" height="28" viewBox="0 0 28 28"><rect x="3.6" y="4.6" width="18.6" height="19" rx="2.6" fill="#fff" stroke="#000" stroke-width="1.3"/><g transform="translate(-1 0)"><g fill="none" stroke="#3c3c5c" stroke-width="1.2"><path d="M6.8 10.8Q9.6 10.8 11.6 14Q13.6 17.4 16.6 17.4M6.8 17.4Q9.6 17.4 11.6 14Q13.6 10.8 16.6 10.8"/><path d="M16.8 8.6L20.8 10.8L16.8 13ZM16.8 15.2L20.8 17.4L16.8 19.6Z" stroke-linejoin="round"/></g></g></svg></div>
<div class="lb" style="left:369px"><svg style="left:0px;top:-1px" width="28" height="28" viewBox="0 0 28 28"><rect x="3.6" y="4.6" width="18.6" height="19" rx="2.6" fill="#fff" stroke="#000" stroke-width="1.3"/><path d="M18.4 12.2A5.8 5.8 0 1 1 12.6 9.3" fill="none" stroke="#000" stroke-width="2" stroke-linecap="round"/><path d="M10.2 7.9H14.6L12.2 11.9Z" fill="#000"/></svg></div>
<div class="t blue" style="left:620px;top:241px">共0个，其中<span lang="ja">：</span>目录0个，文档0个，压缩包0个，音乐0个，视频0个，其他0个</div>

<div class="a" style="left:6px;top:265px;width:1027px;height:364px;background:#fff;border:1px solid #828790"></div>
<div class="hs" style="left:461px"></div>
<div class="hs" style="left:641px"></div>
<div class="hs" style="left:821px"></div>
<div class="hs" style="left:871px"></div>
<div class="hs" style="left:931px"></div>
<div class="ht" style="left:7px;width:454px">保存位置</div>
<div class="ht" style="left:462px;width:179px">原文件名</div>
<div class="ht" style="left:642px;width:179px">预览文件名</div>
<div class="ht" style="left:822px;width:49px">扩展名</div>
<div class="ht" style="left:872px;width:59px">尺寸</div>
<div class="ht" style="left:932px;width:100px">备注</div>
<svg class="a" style="left:1037px;top:270px" width="10" height="8" viewBox="0 0 10 8"><path d="M1.5 6.5L5 1.5L8.5 6.5Z" fill="#a3a3a3" stroke="#a3a3a3" stroke-width="1.2" stroke-linejoin="round"/></svg>
<svg class="a" style="left:1037px;top:617px" width="10" height="8" viewBox="0 0 10 8"><path d="M1.5 1.5L5 6.5L8.5 1.5Z" fill="#a3a3a3" stroke="#a3a3a3" stroke-width="1.2" stroke-linejoin="round"/></svg>

<!-- status bar -->
<div class="a" style="left:1px;top:634px;width:1054px;height:40px;border-top:1px solid #fff;border-left:1px solid #fff;border-right:1px solid #696969;border-bottom:1px solid #696969;box-shadow:inset -1px -1px 0 #fff;border-radius:0 0 8px 8px"></div>
<svg style="position:absolute;left:6px;top:632px" width="27" height="28" viewBox="0 0 27 28"><circle cx="13" cy="14" r="9.3" fill="#fff" stroke="#ff9417" stroke-width="1.4"/><g fill="#666"><rect x="12" y="5.299999999999999" width="2" height="1"/><rect x="12" y="21.7" width="2" height="1"/><rect x="4.299999999999999" y="13" width="1" height="2"/><rect x="20.7" y="13" width="1" height="2"/></g><text x="7.6" y="17.6" font-family="Liberation Sans" font-weight="bold" font-style="italic" font-size="11.7" fill="#ff0000" textLength="10" lengthAdjust="spacingAndGlyphs">AI</text></svg>
<div class="t" style="left:35px;top:638px;color:#ff0000">自动更名</div>
<div class="t" style="left:88px;top:638px">主要针对<span class="blue">文档</span>、<span class="blue">音乐</span>、<span class="blue">压缩包</span>、<span class="blue">目录</span>，按其当前的设定进行更名。支持的文档有<span lang="ja">：</span><span class="blue" style="font-family:'Liberation Mono',monospace;font-size:10px;font-weight:bold;-webkit-text-stroke:0">Word</span>、<span class="blue" style="font-family:'Liberation Mono',monospace;font-size:10px;font-weight:bold;-webkit-text-stroke:0">Excel</span>、<span class="blue">文本文件</span>、<span class="blue">网页</span>，使用自动更名前最好检查一下当前设定。</div>

<div id="frame"></div>

</body></html>
